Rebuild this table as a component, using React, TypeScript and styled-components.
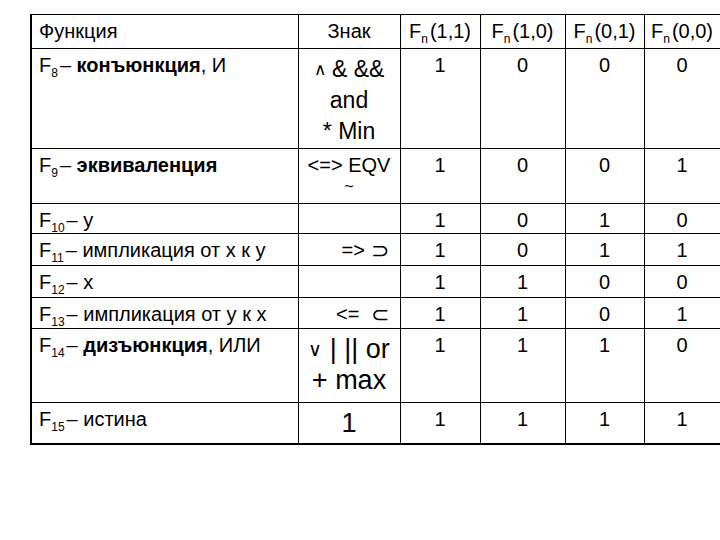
import styled, { createGlobalStyle } from 'styled-components';

type Bit = 0 | 1;
type SignSize = 'normal' | 'big' | 'large';

type Row = {
  index: number;
  name: string;
  bold?: string;
  tail?: string;
  sign: string[];
  signSize?: SignSize;
  signAlign?: 'center' | 'right';
  values: Bit[];
  height: number;
};

const ROWS: Row[] = [
  { index: 8, name: '', bold: 'конъюнкция', tail: ', И', sign: ['∧ & &&', 'and', '* Min'], signSize: 'big', values: [1, 0, 0, 0], height: 100 },
  { index: 9, name: '', bold: 'эквиваленция', sign: ['<=> EQV', '~'], values: [1, 0, 0, 1], height: 55 },
  { index: 10, name: 'y', sign: [], values: [1, 0, 1, 0], height: 30 },
  { index: 11, name: 'импликация от x к y', sign: ['=> ⊃'], signAlign: 'right', values: [1, 0, 1, 1], height: 32 },
  { index: 12, name: 'x', sign: [], values: [1, 1, 0, 0], height: 32 },
  { index: 13, name: 'импликация от y к x', sign: ['<=  ⊂'], signAlign: 'right', values: [1, 1, 0, 1], height: 31 },
  { index: 14, name: '', bold: 'дизъюнкция', tail: ', ИЛИ', sign: ['∨ | || or', '+ max'], signSize: 'large', values: [1, 1, 1, 0], height: 74 },
  { index: 15, name: 'истина', sign: ['1'], signSize: 'large', values: [1, 1, 1, 1], height: 41 },
];

const ARGS = ['1,1', '1,0', '0,1', '0,0'];
const COLUMN_WIDTHS = [267, 102, 80, 85, 79, 76];

const renderSignLine = (line: string) => {
  // logical operators are drawn a bit smaller in the original slide
  if (line.startsWith('∧') || line.startsWith('∨')) {
    return (
      <>
        <Op>{line[0]}</Op>
        {line.slice(1)}
      </>
    );
  }
  // set symbols are drawn larger
  const last = line[line.length - 1];
  if (last === '⊃' || last === '⊂') {
    return (
      <>
        {line.slice(0, -1)}
        <SetOp>{last}</SetOp>
      </>
    );
  }
  return line;
};

export default function App() {
  return (
    <>
      <GlobalStyle />
      <Page>
        <Table>
          <colgroup>
            {COLUMN_WIDTHS.map((w, i) => (
              <Col key={i} $width={w} />
            ))}
          </colgroup>
          <thead>
            <TableRow $height={34}>
              <NameCell as="th">Функция</NameCell>
              <HeadCell>Знак</HeadCell>
              {ARGS.map(a => (
                <HeadCell key={a}>
                  F<Sub>n</Sub>({a})
                </HeadCell>
              ))}
            </TableRow>
          </thead>
          <tbody>
            {ROWS.map(row => (
              <TableRow key={row.index} $height={row.height}>
                <NameCell>
                  F<Sub>{row.index}</Sub>– {row.name}
                  {row.bold && <b>{row.bold}</b>}
                  {row.tail}
                </NameCell>
                <SignCell $size={row.signSize ?? 'normal'} $align={row.signAlign ?? 'center'}>
                  {row.sign.map((line, i) => (
                    <SignLine key={i} $tilde={line === '~'}>
                      {renderSignLine(line)}
                    </SignLine>
                  ))}
                </SignCell>
                {row.values.map((v, i) => (
                  <ValueCell key={i}>{v}</ValueCell>
                ))}
              </TableRow>
            ))}
          </tbody>
        </Table>
      </Page>
    </>
  );
}

const GlobalStyle = createGlobalStyle`
  body {
    margin: 0;
    background: #ffffff;
    font-family: "Liberation Sans", Arial, sans-serif;
    color: #000;
  }
`;

const Page = styled.main`
  width: 720px;
  height: 540px;
  padding: 14px 0 0 30px;
  box-sizing: border-box;
`;

const Table = styled.table`
  width: 689px;
  table-layout: fixed;
  border-collapse: collapse;
  border-top: 1px solid #000;
  border-right: 1px solid #000;
  border-left: 2px solid #000;
  border-bottom: 2px solid #000;

  b {
    font-weight: bold;
  }
`;

const Col = styled.col<{ $width: number }>`
  width: ${({ $width }) => $width}px;
`;

const TableRow = styled.tr<{ $height: number }>`
  height: ${({ $height }) => $height}px;
`;

const BaseCell = styled.td`
  border: 1px solid #000;
  vertical-align: top;
  padding: 5px 0 0;
  font-size: 20px;
  line-height: 23px;
  font-weight: normal;
  white-space: nowrap;
`;

const Sub = styled.sub`
  font-size: 12px;
  vertical-align: -5px;
  line-height: 0;
  margin-right: 2px;
`;

const NameCell = styled(BaseCell)`
  text-align: left;
  padding-left: 7px;
`;

const HeadCell = styled(BaseCell).attrs({ as: 'th' })`
  text-align: center;
`;

const SignCell = styled(BaseCell)<{ $size: SignSize; $align: 'center' | 'right' }>`
  text-align: ${({ $align }) => $align};
  padding-right: ${({ $align }) => ($align === 'right' ? '11px' : '0')};
  font-size: ${({ $size }) => ($size === 'large' ? '27px' : $size === 'big' ? '23px' : '20px')};
  line-height: ${({ $size }) => ($size === 'normal' ? '23px' : '31px')};
  white-space: pre;
`;

const SignLine = styled.div<{ $tilde: boolean }>`
  line-height: ${({ $tilde }) => ($tilde ? '20px' : 'inherit')};
  font-size: ${({ $tilde }) => ($tilde ? '16px' : 'inherit')};
`;

const Op = styled.span`
  font-size: 0.72em;
  font-weight: 300;
  vertical-align: 2px;
`;

const SetOp = styled.span`
  font-family: "DejaVu Sans", sans-serif;
  font-size: 22px;
  font-weight: 300;
  line-height: 0;
  vertical-align: -1px;
`;

const ValueCell = styled(BaseCell)`
  text-align: center;
`;
